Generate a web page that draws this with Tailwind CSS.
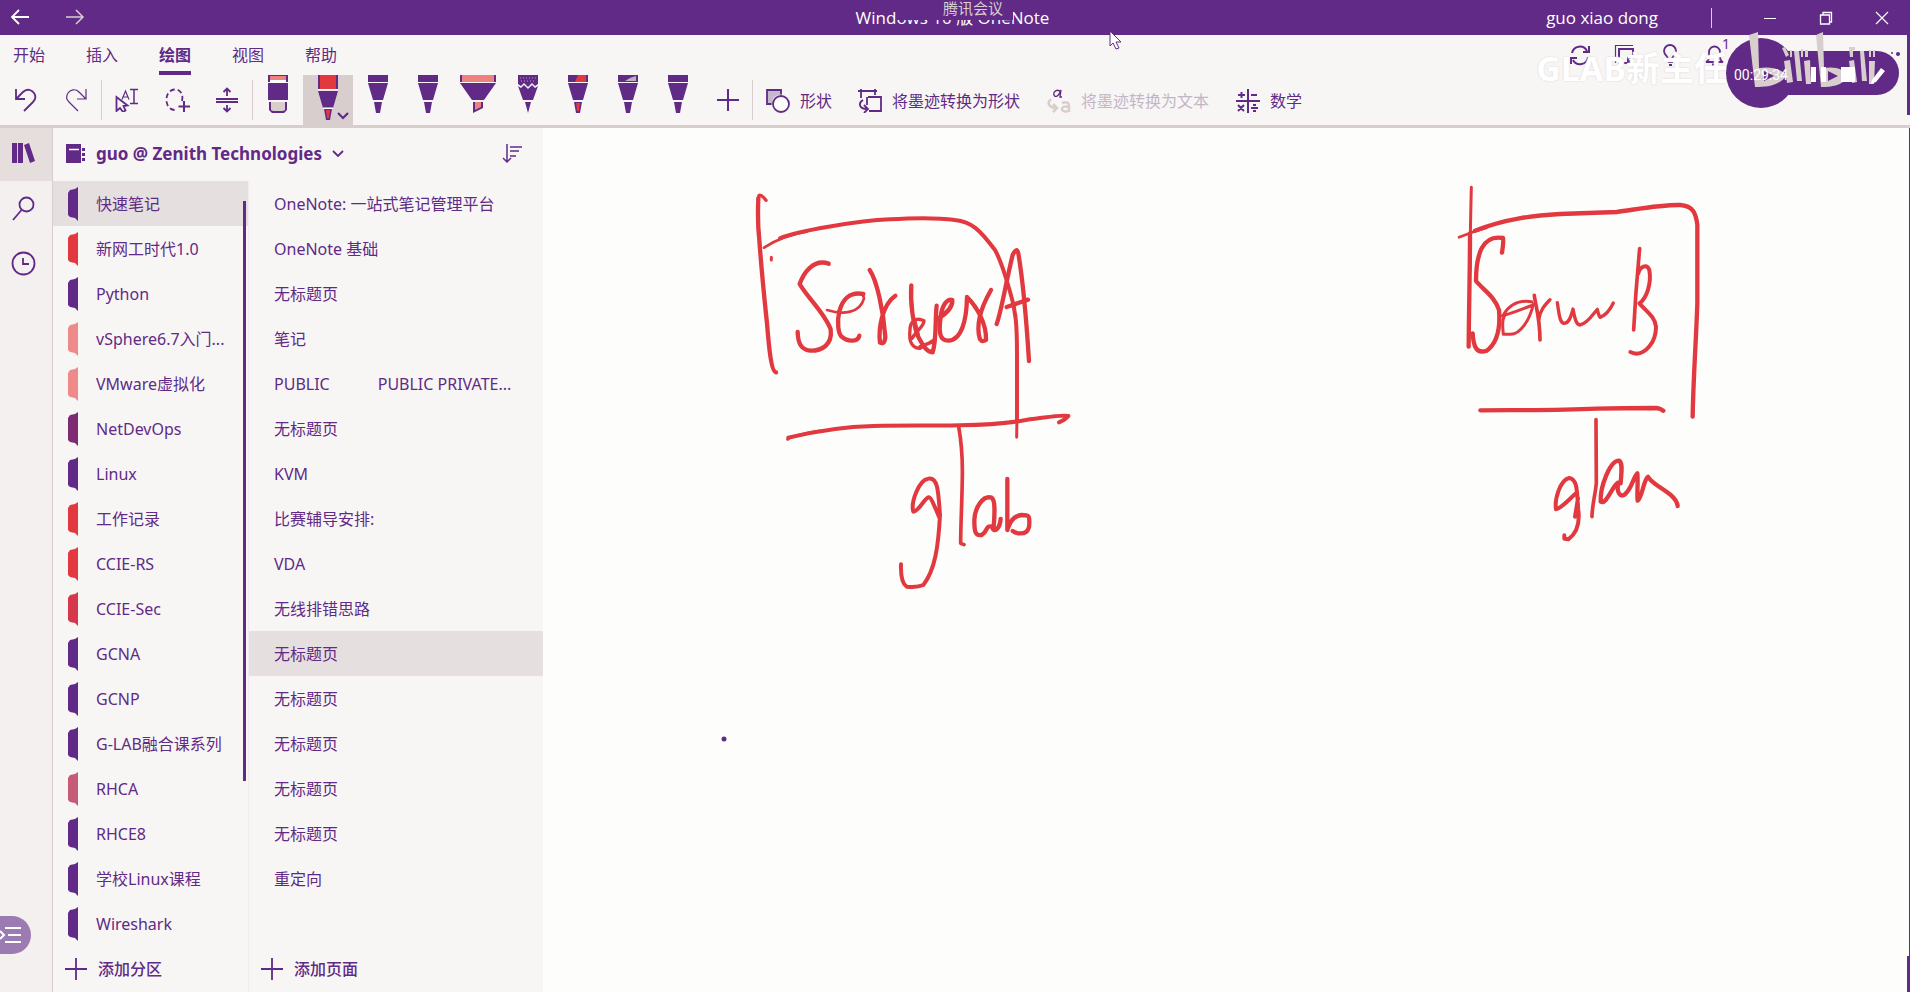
<!DOCTYPE html>
<html lang="zh-CN">
<head>
<meta charset="utf-8">
<title>OneNote</title>
<script src="https://cdn.jsdelivr.net/npm/@tailwindcss/browser@4"></script>
</head>
<body class="relative flex min-h-screen flex-col overflow-x-hidden bg-[#fdfdfb] font-['Noto_Sans','Noto_Sans_CJK_SC',sans-serif] text-base text-[#602a86]">

<!-- Title bar -->
<header class="relative flex h-[35px] items-center bg-[#602a86] font-['Open_Sans','Noto_Sans_CJK_SC',sans-serif] text-white">
  <button aria-label="后退" class="flex h-[30px] w-[41px] justify-end pr-[11px] pt-[6px]"><svg width="20" height="16" fill="none" stroke="currentColor" stroke-width="1.800"><path d="M19 8H2M9 1L2 8l7 7"/></svg></button>
  <button aria-label="前进" class="ml-6 flex h-[30px] w-[41px] pt-[6px]"><svg width="20" height="16" fill="none" stroke="#d8cece" stroke-width="1.500"><path d="M1 8h17M11 1l7 7-7 7"/></svg></button>
  <h1 class="absolute left-1/2 w-[200px] -translate-x-1/2 whitespace-nowrap pr-[5px] text-center text-[17px] leading-6">Windows 10 版 OneNote</h1>
  <div class="absolute left-1/2 top-0 flex h-[20px] w-[116px] -translate-x-1/2 justify-center bg-[#602a86] pl-9 text-[15px] leading-4 text-[#d8cece]">腾讯会议</div>
  <span class="ml-auto text-[17px]">guo xiao dong</span>
  <span class="ml-[53px] h-5 w-px bg-[#d8cece]"></span>
  <button aria-label="最小化" class="ml-[30px] flex h-[30px] w-[56px] items-center justify-center"><svg width="14" height="14" stroke="currentColor"><path d="M1 7.500h12"/></svg></button>
  <button aria-label="还原" class="flex h-[30px] w-[56px] items-center justify-center"><svg width="14" height="14" fill="none" stroke="currentColor" stroke-width="1.300"><path d="M1.500 4h9v9h-9zM4 4V1.500h8.500V11h-2"/></svg></button>
  <button aria-label="关闭" class="flex h-[30px] w-[56px] items-center justify-center"><svg width="14" height="14" stroke="currentColor" stroke-width="1.200"><path d="M1 1l12 12M13 1L1 13"/></svg></button>
</header>

<!-- Ribbon -->
<section class="border-b-[3px] border-[#d8cece] bg-[#f8f6f5]">
  <div class="flex h-10 items-stretch pl-[13px]">
    <nav class="flex gap-[41px]">
      <button>开始</button>
      <button>插入</button>
      <button class="border-b-4 border-[#602a86] pt-1 font-bold">绘图</button>
      <button>视图</button>
      <button>帮助</button>
    </nav>
    <div class="ml-auto mr-[182px] flex items-center">
      <button aria-label="同步" class="w-[45px]"><svg width="22" height="22" fill="none" stroke="currentColor" stroke-width="2"><path d="M3 9a8 8 0 0 1 15-2M19 13a8 8 0 0 1-15 3M20 2v6h-6M2 20v-6h6"/></svg></button>
      <button aria-label="便笺" class="w-[45px]"><svg width="22" height="22" fill="none" stroke="currentColor"><path d="M1.500 19V1.500H19" stroke-width="1.200"/><path stroke-width="2" d="M5 18V5h14v9l-5 5H5zM14 19v-5h5"/></svg></button>
      <button aria-label="提示" class="w-[45px]"><svg width="22" height="22" fill="none" stroke="currentColor" stroke-width="1.800"><path d="M9 15c0-3-4-4-4-8a6 6 0 0 1 12 0c0 4-4 5-4 8zM9 18h5M10 21h3"/></svg></button>
      <button aria-label="通知" class="relative w-[24px]"><svg width="22" height="22" fill="none" stroke="currentColor" stroke-width="1.800"><path d="M2 18c2-1 3-2 3-5V8a5.500 5.500 0 0 1 11 0v5c0 3 1 4 3 5zM8 20.500h5"/></svg><span class="absolute -top-2 left-[18px] text-sm leading-4">1</span></button>
    </div>
  </div>

  <div class="flex h-[50px] items-stretch pl-px">
    <button aria-label="撤消" class="grid w-[50px] place-items-center"><svg width="24" height="24" fill="none" stroke="currentColor" stroke-width="1.800"><path d="M2 1v10h9M2 11L9 4c4-4 9-2 11 1s2 6-1 9L10 23"/></svg></button>
    <button aria-label="恢复" class="grid w-[50px] place-items-center"><svg width="24" height="24" fill="none" stroke="currentColor" stroke-width="1.200"><path d="M22 1v10h-9M22 11L15 4c-4-4-9-2-11 1s-2 6 1 9l9 9"/></svg></button>
    <span class="my-[5px] w-px bg-[#d8cece]"></span>
    <button aria-label="套索选择文本" class="grid w-[50px] place-items-center"><svg width="26" height="24" fill="none" stroke="currentColor"><path d="M2.500 9v14l3.500-3 3 4 2.500-1.500-2-4.500 4-.5z" stroke-width="1.800"/><path d="M8 11.500L11.500 3 15 11.500M9 9h5" stroke-width="1.200"/><path d="M16 1.500h8M16 15.500h8M20 1.500v14" stroke-width="1.500"/></svg></button>
    <button aria-label="套索" class="grid w-[50px] place-items-center"><svg width="26" height="24" fill="none" stroke="currentColor"><path stroke-width="1.800" stroke-dasharray="5 3" d="M18 13C20 5 15 1 10.500 1.500C5 2 2 7 2.500 13C3 18 6 22 11 22"/><path d="M20 13v11M14.500 18.500H26" stroke-width="2"/></svg></button>
    <button aria-label="插入空间" class="grid w-[50px] place-items-center"><svg width="24" height="26" fill="none" stroke="currentColor" stroke-width="1.800"><path d="M1 12h22M1 15h22M12 9V2M8.500 5L12 1.500 15.500 5M12 18v6M8.500 21l3.500 3.500 3.500-3.500"/></svg></button>
    <span class="my-[5px] w-px bg-[#d8cece]"></span>
    <button aria-label="橡皮擦" class="w-[50px]"><svg class="mx-auto block h-[50px] w-[40px]"><path fill="#602a86" d="M10 0h20v7H10zM10 8h20v17H10zM11 27h18v8l-3 3H14l-3-3z"/><path fill="#ee8080" d="M12 1h16v4H12z"/><path fill="#fdfdfb" d="M12 5h16v3H12z"/><path fill="#d8cece" d="M13 27h14v8l-2 1H15l-2-1z"/></svg></button>
    <button aria-label="红色笔" aria-pressed="true" class="w-[50px] bg-[#d8cece]"><svg class="mx-auto block h-[50px] w-[50px]"><path fill="#602a86" d="M15 0h20v14H15zM15 16h20l-5 17H20zM21 34h8l-2 11h-4z"/><path fill="#e1393f" d="M17 0h16v14H17zM23 35h4l-1 8h-2z"/><path fill="#fff" d="M15 14h20v1.500H15zM20 32.500h10V34H20z"/><path d="M35 38l5 5 5-5" stroke="#602a86" stroke-width="2.200" fill="none"/></svg></button>
    <button aria-label="笔 2" class="w-[50px]"><svg class="mx-auto block h-[50px] w-[40px]" fill="#602a86"><path d="M10 0h20v7H10zM10 8h20l-5 17H15zM16 27h8l-2 11h-4z"/></svg></button>
    <button aria-label="笔 3" class="w-[50px]"><svg class="mx-auto block h-[50px] w-[40px]" fill="#602a86"><path d="M10 0h20v7H10zM10 8h20l-5 17H15zM16 27h8l-2 11h-4z"/></svg></button>
    <button aria-label="荧光笔" class="w-[50px]"><svg class="mx-auto block h-[50px] w-[40px]" fill="#602a86"><path d="M2 0h36v7H2zM2 8h36L26 25H14zM15 27h10v6l-10 5z"/><path fill="#ee8080" d="M4 0h32v7H4zM17 27h6v5l-6 3z"/></svg></button>
    <button aria-label="铅笔" class="w-[50px]"><svg class="mx-auto block h-[50px] w-[40px]" fill="#602a86"><path d="M10 0h20v9l-3 2-3-3-4 4-4-4-3 3-3-2zM10 11l3 2 3-3 4 4 4-4 3 3 3-2-5 14H15zM17 27h6l-3 11z"/><path d="M12 3h16M13 6h14" stroke="#b59bbb" stroke-dasharray="1 2"/></svg></button>
    <button aria-label="笔 6" class="w-[50px]"><svg class="mx-auto block h-[50px] w-[40px]" fill="#602a86"><path d="M10 0h20v7H10zM10 8h20l-5 17H15zM16 27h8l-2 11h-4z"/><path fill="#e1393f" d="M20 0h8v7H17zM18 28h4l-1 8h-2z"/></svg></button>
    <button aria-label="笔 7" class="w-[50px]"><svg class="mx-auto block h-[50px] w-[40px]" fill="#602a86"><path d="M10 0h20v7H10zM10 8h20l-5 17H15zM16 27h8l-2 11h-4z"/><path fill="#c0afc4" d="M17 6l5-3 6-2v5z"/></svg></button>
    <button aria-label="笔 8" class="w-[50px]"><svg class="mx-auto block h-[50px] w-[40px]" fill="#602a86"><path d="M10 0h20v7H10zM10 8h20l-5 17H15zM16 27h8l-2 11h-4z"/></svg></button>
    <button aria-label="添加笔" class="grid w-[49px] place-items-center"><svg width="22" height="22" stroke="currentColor" stroke-width="2"><path d="M11 0v22M0 11h22"/></svg></button>
    <span class="my-[5px] w-px bg-[#d8cece]"></span>
    <button class="flex items-center gap-[10px] px-[13px] pt-px"><svg width="24" height="24" fill="none" stroke="currentColor" stroke-width="1.800"><path fill="#c7b8cb" d="M1 1h14v14H1z"/><circle cx="15" cy="15" r="9.500" fill="#f8f6f5" stroke="none"/><circle cx="15" cy="15" r="8" fill="#fdfdfb"/></svg>形状</button>
    <button class="flex items-center gap-[10px] px-[13px] pt-px"><svg width="24" height="24" fill="none" stroke="currentColor" stroke-width="1.800"><path d="M0 2h19M3 0v9M17 0v6M10 8h13v14H11M9 8v8M5 11c-5 3-4 9 4 9M6 16l4 4-4 4"/></svg>将墨迹转换为形状</button>
    <button disabled class="flex items-center gap-[10px] px-[14px] pt-px text-[#c3b5c8]"><svg width="24" height="24" fill="none" stroke="#d8cece" stroke-width="2.500"><path d="M4 10c-4 4-3 8 5 9M6 15l4 4-4 4M15 14c5-2 7 0 7 3v6M22 18c-5-1-7 0-7 2s4 4 7 1"/><path stroke="#602a86" stroke-width="1.300" d="M14 3c-4-4-8 0-7 3s5 1 6-3l1-2-1 7h2"/></svg>将墨迹转换为文本</button>
    <button class="flex items-center gap-[10px] px-[13px] pt-px"><svg width="24" height="24" fill="none" stroke="currentColor" stroke-width="2"><path d="M12 0v24M0 12h24M2 6h7M5.500 3v6M15 6h6M2 16l6 6M8 16l-6 6M15 19h7M17 16h3M17 22h3"/></svg>数学</button>
  </div>
</section>

<div class="flex flex-1">
  <!-- Navigation rail -->
  <nav class="relative flex w-[53px] flex-col border-r border-[#d8cece] bg-[#f3f0ef]">
    <button aria-label="笔记本" class="h-[53px] bg-[#e5dedd] pb-1 pl-[11px]"><svg width="26" height="24"><path fill="#602a86" d="M1 2h5v20H1zM7 2h5v20H7zM13 4l5-2 6 18-5 2z"/><path d="M6.500 2v20" stroke="#d8cece"/></svg></button>
    <button aria-label="搜索" class="h-[55px] pl-[11px]"><svg width="26" height="26" fill="none" stroke="currentColor" stroke-width="1.800"><circle cx="15.500" cy="8.500" r="7"/><path d="M10.500 14L2 24"/></svg></button>
    <button aria-label="最近的笔记" class="h-[55px] pl-[11px]"><svg width="26" height="26" fill="none" stroke="currentColor" stroke-width="1.800"><circle cx="12.500" cy="12.500" r="11"/><path d="M12 7v6h6"/></svg></button>
    <button aria-label="会议面板" class="absolute bottom-[38px] left-0 h-[38px] w-[31px] rounded-r-full bg-[#9b7bb1]"><svg width="24" height="38" fill="none" stroke="#fff" stroke-width="2"><path d="M5 12h16M8 19h13M5 26h16M0 15l4 4-4 4"/></svg></button>
  </nav>

  <!-- Sections and pages -->
  <aside class="flex w-[490px] flex-col bg-[#f8f6f5]">
    <div class="flex h-[53px] items-center pb-0.5 pl-[13px] pr-[21px]">
      <svg width="20" height="20"><path fill="#602a86" d="M0 0h15v19H0zM16 4h3v3h-3zM16 9h3v3h-3zM16 14h3v3h-3z"/><path stroke="#fff" stroke-width="1.500" d="M3 5.500h10"/></svg>
      <button class="ml-[10px] flex items-center gap-[10px] text-[17px] font-bold">guo @ Zenith Technologies<svg width="12" height="8" fill="none" stroke="currentColor" stroke-width="1.800"><path d="M1 1l5 5 5-5"/></svg></button>
      <button aria-label="排序" class="ml-auto"><svg width="20" height="20" fill="none" stroke="currentColor" stroke-width="1.500"><path d="M5 0v18M1 14l4 4 4-4M8 3h12M8 7h9M8 12h6"/></svg></button>
    </div>
    <div class="flex flex-1">
      <div class="relative flex w-[195px] flex-col">
        <ul id="sections" class="flex-1"></ul>
        <div class="absolute right-[2px] top-[20px] h-[580px] w-[3px] bg-[#602a86]"></div>
        <button class="flex h-[46px] items-center gap-[11px] pl-3 font-medium"><svg width="22" height="22" stroke="currentColor" stroke-width="1.800"><path d="M11 0v22M0 11h22"/></svg>添加分区</button>
      </div>
      <div class="flex min-w-0 flex-1 flex-col border-l border-[#f1ecec]">
        <ul id="pages" class="flex-1"></ul>
        <button class="flex h-[46px] items-center gap-[11px] pl-3 font-medium"><svg width="22" height="22" stroke="currentColor" stroke-width="1.800"><path d="M11 0v22M0 11h22"/></svg>添加页面</button>
      </div>
    </div>
  </aside>

  <!-- Ink canvas -->
  <main class="min-w-0 flex-1 overflow-hidden border-r border-[#602a86]">
    <svg class="block w-full" viewBox="543 128 1366 864" fill="none" stroke="#e1393f" stroke-linecap="round" stroke-linejoin="round">
      <circle cx="724" cy="739" r="2.500" fill="#602a86" stroke="none"/>
      <g transform="translate(700 170) scale(.33333)" stroke-width="13">
        <path stroke-width="10" d="M198 91Q186 74 177 76L174 90"/>
        <path d="M175 85C173 130 174 175 178 210C183 280 193 385 201 460C207 535 214 605 228 607"/>
        <path stroke-width="8" d="M192 233C235 205 270 193 320 185"/>
        <path stroke-width="12" d="M240 205C290 182 480 152 570 148C650 143 720 144 765 150C815 155 840 180 885 240C905 275 920 330 930 365C948 420 951 470 951 550L951 750"/>
        <path stroke-width="9" d="M951 740L950 802M214 262v8"/>
        <path d="M386 281C340 265 310 310 299 342C320 380 375 430 392 478C398 525 365 543 330 542C300 538 294 515 293 486"/>
        <path stroke-width="8" d="M381 420C430 435 480 430 492 385C490 360 430 360 415 430"/>
        <path d="M490 372C405 355 405 485 425 500C445 518 475 515 478 497"/>
        <path d="M509 300C530 330 550 420 556 500C555 520 548 522 540 518C535 480 545 405 586 377"/>
        <path d="M634 346C630 400 640 460 652 495C670 530 680 545 698 547C710 510 705 450 710 407"/>
        <path stroke-width="10" d="M636 505C650 480 672 470 672 452C645 440 630 455 630 480C625 520 640 535 660 535L705 508M645 455L655 495M660 530L700 515"/>
        <path d="M715 445C740 430 758 410 757 390C745 385 727 400 722 440C715 490 720 512 745 512C785 510 800 450 801 381C830 410 860 460 858 510C850 515 845 515 840 508C825 460 850 400 873 360"/>
        <path d="M890 462C905 420 915 350 938 255C945 240 952 235 955 250C970 340 978 430 987 573"/>
        <path d="M920 411L984 389"/>
        <path stroke-width="9" d="M263 808C270 800 320 790 360 783"/>
        <path stroke-width="12" d="M265 803C340 785 430 770 520 768C640 765 720 768 780 766C870 765 930 760 990 748C1040 742 1090 733 1105 738Q1095 750 1077 757"/>
        <path stroke-width="11" d="M776 770C785 820 788 860 787 920C786 1000 782 1060 782 1120L792 1124"/>
        <path stroke-width="12" d="M717 1040C700 1000 692 980 685 982C670 990 655 1025 640 1025C632 1000 655 930 685 926C715 920 715 970 720 1035C715 1130 705 1200 670 1245C655 1252 640 1252 620 1250C605 1240 602 1215 603 1183"/>
        <path d="M881 1070C885 1020 885 990 875 983C850 975 825 1010 823 1050C823 1085 825 1098 845 1095C865 1085 855 1065 875 1070C885 1095 900 1070 902 1047"/>
        <path d="M922 927L922 1080C930 1055 940 1038 965 1035C990 1035 988 1040 988 1060C988 1085 975 1092 955 1090Q945 1088 938 1083"/>
      </g>
      <g transform="translate(1420 170) scale(.33333)" stroke-width="13">
        <path stroke-width="9" d="M154 52C153 100 151 150 150 300"/>
        <path d="M150 190C150 300 147 400 146 530"/>
        <path stroke-width="8" d="M117 202C150 188 175 180 200 173"/>
        <path d="M165 182C260 145 340 137 420 132C480 130 540 128 590 126C650 118 720 104 780 105C820 108 828 130 832 165L832 400C828 520 820 620 818 740"/>
        <path d="M246 248C250 225 250 210 249 204C225 200 200 205 185 235C170 265 168 300 168 333C190 360 225 380 237 420C242 480 230 520 200 542C165 555 160 520 158 490"/>
        <path stroke-width="9" d="M247 437C280 430 310 415 340 405M250 435C270 400 300 390 335 395M340 402C330 450 300 495 270 493H250C245 450 250 440 258 432"/>
        <path stroke-width="11" d="M343 376C345 400 360 440 360 510"/>
        <path stroke-width="10" d="M356 450C360 420 375 405 390 389M412 398C418 440 420 455 430 460C450 462 455 430 459 417C465 450 470 465 480 465C505 460 520 430 532 418Q535 435 540 442C560 435 570 420 580 399"/>
        <path stroke-width="11" d="M659 236C650 330 645 400 641 480"/>
        <path stroke-width="12" d="M655 310C660 290 680 280 688 300C695 340 680 385 658 400C680 425 705 440 708 470C708 520 675 550 650 551Q640 550 631 546"/>
        <path d="M181 721C290 720 400 722 530 716C600 714 670 714 710 714Q722 716 730 722"/>
        <path stroke-width="11" d="M528 749L529 940C525 980 517 1000 516 1040"/>
        <path stroke-width="12" d="M468 970C450 985 425 1015 408 1018C403 990 420 930 447 924C475 928 470 970 475 1020C480 1060 470 1090 445 1108L433 1106V1096M465 1040L474 985"/>
        <path d="M602 940C605 900 608 880 598 872C570 870 540 950 542 995C560 1005 575 950 594 938C590 970 600 980 612 975C635 960 640 920 652 910C655 940 650 970 653 992C668 980 670 930 684 920C700 950 770 970 773 1008"/>
      </g>
    </svg>
  </main>
</div>

<!-- Video watermark and recorder control over the ribbon -->
<div class="pointer-events-none absolute right-[182px] top-[46px] text-[34px] font-bold leading-[44px] text-white [text-shadow:0_0_2px_#d8cece]">GLAB新主任</div>
<div class="absolute right-0 top-[30px] h-[90px] w-[186px]">
  <div class="absolute right-[11px] top-[21px] h-[44px] w-[150px] rounded-full bg-[#602a86]"></div>
  <div class="absolute left-[2px] top-[8px] size-[70px] rounded-full bg-[#602a86]"></div>
  <svg class="absolute left-0 top-0" width="186" height="90">
    <g fill="#d8cece">
      <path d="M25 5l9-3 1 36c14-2 22 2 28 7-8 11-20 12-32 12z"/>
      <path d="M92 5l7-3 1 36c12-2 20 2 26 7-8 11-18 12-29 12z"/>
      <path d="M60 31l6-1 3 22-6 1zM70 21h5l3 30h-5zM80 31l6-1 1 24h-5zM125 31l5-1 3 22-5 1zM136 21h4l3 30h-5zM145 31h6l-1 23h-5z"/>
      <path d="M58 18l3-1 4 8-3 2zM66 20h2v7h-2zM77 19h2v8h-2zM81 20h3v7h-3zM125 17h6v3h-2v7h-3zM145 20h2v7h-2zM149 20h2v7h-2z"/>
    </g>
    <path fill="#602a86" d="M40 41l10 5-10 5zM104 41l10 5-10 5z"/>
    <path fill="#fff" d="M87 37h5v15h-5zM97 37h5v15h-5zM117 37h14v15h-14zM148 50l9-12 4 3-9 11-5 2z"/>
    <circle cx="174" cy="24" r="2" fill="#602a86"/><circle cx="168" cy="23" r="1" fill="#602a86"/>
  </svg>
  <span class="absolute left-[10px] top-[35px] font-['Roboto'] text-sm leading-5 text-white">00:29:34</span>
</div>
<div class="absolute right-0 top-[35px] h-[80px] w-[3px] bg-[#602a86]"></div>
<div class="absolute bottom-0 right-0 h-[36px] w-[3px] bg-[#602a86]"></div>
<svg class="pointer-events-none absolute left-[1109px] top-[30px]" width="14" height="20"><path fill="#fff" stroke="#602a86" d="M1 1v15l3-3 3 6 3-1-3-6h5z"/></svg>

<script>
const P = '#602a86', R = '#e1393f', K = '#ee8a8a';
const sections = [['快速笔记',P],['新网工时代1.0',R],['Python',P],['vSphere6.7入门...',K],['VMware虚拟化',K],['NetDevOps','#7d2c74'],['Linux',P],['工作记录',R],['CCIE-RS',R],['CCIE-Sec','#d4384a'],['GCNA',P],['GCNP',P],['G-LAB融合课系列',P],['RHCA','#c45c78'],['RHCE8',P],['学校Linux课程',P],['Wireshark',P]];
const pages = ['OneNote: 一站式笔记管理平台','OneNote 基础','无标题页','笔记','PUBLIC\u2003\u2003\u2003PUBLIC PRIVATE...','无标题页','KVM','比赛辅导安排:','VDA','无线排错思路','无标题页','无标题页','无标题页','无标题页','无标题页','重定向'];
document.getElementById('sections').innerHTML = sections.map(([name, color], i) =>
  `<li><button class="flex h-[45px] w-full items-center gap-[18px] whitespace-nowrap pl-[15px] ${i === 0 ? 'bg-[#e6dfdf]' : ''}"><svg width="10" height="34" class="shrink-0"><path fill="${color}" d="M10 0v34l-3-3-5-1-2-2V6l2-3 5-1z"/></svg>${name}</button></li>`).join('');
document.getElementById('pages').innerHTML = pages.map((name, i) =>
  `<li><button class="flex h-[45px] w-full items-center whitespace-nowrap pl-[25px] ${i === 10 ? 'bg-[#e6dfdf]' : ''}">${name}</button></li>`).join('');
</script>
</body>
</html>
